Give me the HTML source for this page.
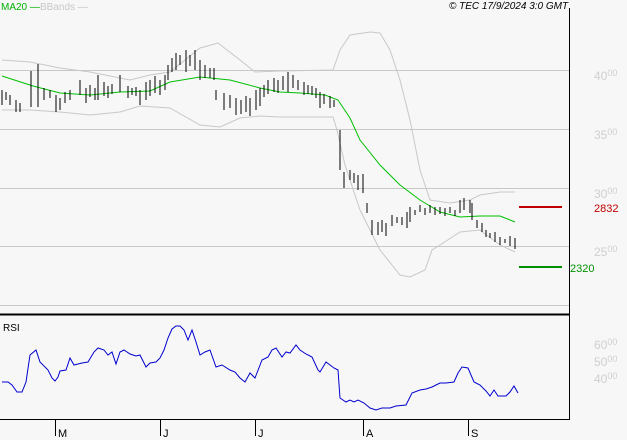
<!DOCTYPE html><html><head><style>body{margin:0;background:#f7f7f7}svg{display:block;font-family:"Liberation Sans",sans-serif}</style></head><body>
<svg width="627" height="440" viewBox="0 0 627 440">
<rect width="627" height="440" fill="#f7f7f7"/>
<g stroke="#c8c8c8" stroke-width="1">
<line x1="0" y1="70.5" x2="569" y2="70.5"/><line x1="0" y1="129.5" x2="569" y2="129.5"/><line x1="0" y1="188.5" x2="569" y2="188.5"/><line x1="0" y1="246.5" x2="569" y2="246.5"/><line x1="0" y1="305.5" x2="569" y2="305.5"/>
</g>
<line x1="569.5" y1="8" x2="569.5" y2="420" stroke="#000"/>
<line x1="0" y1="314.5" x2="569" y2="314.5" stroke="#000" stroke-width="2"/>
<line x1="0" y1="419.5" x2="569" y2="419.5" stroke="#000"/>
<g stroke="#000"><line x1="55.5" y1="420" x2="55.5" y2="436"/><line x1="160.5" y1="420" x2="160.5" y2="436"/><line x1="255.5" y1="420" x2="255.5" y2="436"/><line x1="363.5" y1="420" x2="363.5" y2="436"/><line x1="468.5" y1="420" x2="468.5" y2="436"/></g>
<g font-size="11" fill="#000"><text x="58" y="437">M</text><text x="163" y="437">J</text><text x="258" y="437">J</text><text x="366" y="437">A</text><text x="471" y="437">S</text></g>
<text x="1" y="10" font-size="10" fill="#00b000">MA20 —</text><text x="40" y="10" font-size="10" fill="#c8c8c8">BBands —</text>
<text x="449" y="9" font-size="10" font-style="italic" fill="#000">© TEC 17/9/2024 3:0 GMT</text>
<text x="3" y="331" font-size="10" fill="#000">RSI</text>
<g fill="#cfcfcf" font-size="12"><text x="594" y="80">40<tspan font-size="9" dy="-4">00</tspan></text><text x="594" y="139">35<tspan font-size="9" dy="-4">00</tspan></text><text x="594" y="198">30<tspan font-size="9" dy="-4">00</tspan></text><text x="594" y="256">25<tspan font-size="9" dy="-4">00</tspan></text>
<text x="594" y="349">60<tspan font-size="9" dy="-4">00</tspan></text><text x="594" y="366">50<tspan font-size="9" dy="-4">00</tspan></text><text x="594" y="383">40<tspan font-size="9" dy="-4">00</tspan></text></g>
<line x1="519" y1="207" x2="562" y2="207" stroke="#c00000" stroke-width="2"/><text x="594" y="212" font-size="11" fill="#c00000">2832</text>
<line x1="519" y1="267" x2="562" y2="267" stroke="#009000" stroke-width="2"/><text x="570" y="272" font-size="11" fill="#009000">2320</text>
<g fill="none" stroke="#c8c8c8"><polyline points="2,60 30,62 60,68 90,72 130,80 150,75 170,72 200,48 218,43 240,60 255,72 280,71 333,70 340,50 350,35 370,32 380,33 390,50 400,80 410,120 420,170 430,200 450,203 470,200 480,195 500,192 515,192"/>
<polyline points="2,110 30,110 60,112 90,115 120,112 140,106 170,108 200,125 220,127 240,118 260,116 280,117 300,117 333,117 337,130 345,165 360,210 380,250 400,275 410,277 425,270 432,250 440,245 460,232 480,230 500,245 515,252"/></g>
<polyline fill="none" stroke="#00c000" points="2,76 33,86 60,93 90,95 120,92 150,91 170,82 200,77 230,80 260,88 280,92 300,93 325,95 338,100 350,118 360,140 380,165 400,185 420,200 440,212 460,217 480,216 500,216 515,222"/>
<path stroke="#000" stroke-width="1" shape-rendering="crispEdges" fill="none" d="M2 90V105M6 92V100M10 95V105M16 100V112M20 103V112M31 71V107M38 64V107M44 88V100M50 90V98M56 95V112M60 98V110M65 92V103M70 90V100M80 80V95M86 88V103M90 85V97M95 88V100M98 75V100M104 82V96M108 86V98M112 84V94M120 75V92M128 86V98M132 88V95M136 87V96M140 90V105M146 82V100M150 80V96M155 76V93M160 80V95M165 75V90M168 65V80M172 58V72M176 53V70M180 55V65M186 50V72M190 55V66M195 50V70M200 60V80M205 65V78M210 68V78M214 68V80M216 90V100M224 93V110M230 95V108M236 98V115M241 100V114M246 96V112M250 98V116M256 90V110M260 88V106M264 85V97M268 80V94M274 78V92M278 80V93M283 76V90M288 72V92M293 75V88M298 80V90M304 82V95M308 85V94M312 86V95M316 88V98M320 92V108M324 94V104M330 96V108M334 100V107M340 130V170M344 172V188M350 170V180M354 173V183M358 175V190M363 174V193M367 203V213M372 220V235M378 222V235M382 220V232M386 223V236M392 215V226M397 217V223M402 217V225M407 212V228M410 207V222M415 210V215M420 205V212M425 208V215M430 205V213M435 207V215M440 207V214M445 208V216M450 207V213M455 210V216M460 200V213M464 198V210M470 200V213M472 203V220M477 220V228M482 223V232M486 230V237M490 233V238M495 232V242M500 237V245M505 239V243M510 236V246M515 238V249"/>
<polyline fill="none" stroke="#0000d0" points="2,382 8,382 12,385 17,392 22,392 26,382 30,355 36,350 40,362 48,370 52,378 55,381 58,377 60,371 66,370 70,358 74,365 82,363 88,362 94,352 98,348 104,350 108,355 112,352 116,364 120,352 124,350 130,354 136,356 140,355 146,367 150,363 156,362 160,358 164,350 168,338 172,329 176,326 180,326 184,330 188,340 192,330 196,342 200,355 205,352 210,350 216,367 222,365 230,370 235,372 240,378 245,382 250,373 255,378 262,360 268,357 272,350 276,348 282,357 286,352 290,353 296,345 300,350 306,354 312,357 318,370 320,372 326,362 334,368 338,370 340,398 346,402 350,400 354,402 358,400 364,403 370,408 376,410 382,408 390,408 396,406 406,405 412,393 420,390 426,389 432,387 436,385 440,383 446,383 454,382 458,373 462,367 468,368 474,382 480,385 486,391 490,396 494,390 498,396 506,396 510,392 514,386 518,393"/>
</svg></body></html>
